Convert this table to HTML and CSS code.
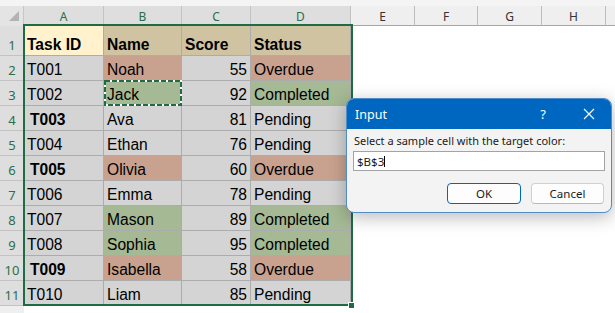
FILE: index.html
```html
<!DOCTYPE html>
<html>
<head>
<meta charset="utf-8">
<link rel="stylesheet" href="styles.css">
</head>
<body>
<div class="app">
  <div class="topstrip"></div>
  <div class="sheet">
    <div class="corner"><svg width="12" height="12" viewBox="0 0 12 12"><polygon points="11,1 11,11 1,11" fill="#b3b3b3"/></svg></div>
    <div class="ch sel">A</div><div class="ch sel">B</div><div class="ch sel">C</div><div class="ch sel">D</div>
    <div class="ch">E</div><div class="ch">F</div><div class="ch">G</div><div class="ch">H</div><div class="ch"></div>

    <div class="rh">1</div>
    <div class="c y b">Task ID</div><div class="c tan b">Name</div><div class="c tan b">Score</div><div class="c tan b">Status</div>
    <div class="e"></div><div class="e"></div><div class="e"></div><div class="e"></div><div class="e"></div>

    <div class="rh">2</div>
    <div class="c">T001</div><div class="c or">Noah</div><div class="c n">55</div><div class="c or">Overdue</div>
    <div class="e"></div><div class="e"></div><div class="e"></div><div class="e"></div><div class="e"></div>

    <div class="rh">3</div>
    <div class="c">T002</div><div class="c gr ants">Jack<svg class="antsvg" width="78" height="26" viewBox="0 0 78 26"><rect x="1" y="1" width="76" height="24" fill="none" stroke="#ffffff" stroke-width="2"/><rect x="1" y="1" width="76" height="24" fill="none" stroke="#1f6b43" stroke-width="2" stroke-dasharray="5 2"/></svg></div><div class="c n">92</div><div class="c gr">Completed</div>
    <div class="e"></div><div class="e"></div><div class="e"></div><div class="e"></div><div class="e"></div>

    <div class="rh">4</div>
    <div class="c b ind">T003</div><div class="c">Ava</div><div class="c n">81</div><div class="c">Pending</div>
    <div class="e"></div><div class="e"></div><div class="e"></div><div class="e"></div><div class="e"></div>

    <div class="rh">5</div>
    <div class="c">T004</div><div class="c">Ethan</div><div class="c n">76</div><div class="c">Pending</div>
    <div class="e"></div><div class="e"></div><div class="e"></div><div class="e"></div><div class="e"></div>

    <div class="rh">6</div>
    <div class="c b ind">T005</div><div class="c or">Olivia</div><div class="c n">60</div><div class="c or">Overdue</div>
    <div class="e"></div><div class="e"></div><div class="e"></div><div class="e"></div><div class="e"></div>

    <div class="rh">7</div>
    <div class="c">T006</div><div class="c">Emma</div><div class="c n">78</div><div class="c">Pending</div>
    <div class="e"></div><div class="e"></div><div class="e"></div><div class="e"></div><div class="e"></div>

    <div class="rh">8</div>
    <div class="c">T007</div><div class="c gr">Mason</div><div class="c n">89</div><div class="c gr">Completed</div>
    <div class="e"></div><div class="e"></div><div class="e"></div><div class="e"></div><div class="e"></div>

    <div class="rh">9</div>
    <div class="c">T008</div><div class="c gr">Sophia</div><div class="c n">95</div><div class="c gr">Completed</div>
    <div class="e"></div><div class="e"></div><div class="e"></div><div class="e"></div><div class="e"></div>

    <div class="rh">10</div>
    <div class="c b ind">T009</div><div class="c or">Isabella</div><div class="c n">58</div><div class="c or">Overdue</div>
    <div class="e"></div><div class="e"></div><div class="e"></div><div class="e"></div><div class="e"></div>

    <div class="rh">11</div>
    <div class="c">T010</div><div class="c">Liam</div><div class="c n">85</div><div class="c">Pending</div>
    <div class="e"></div><div class="e"></div><div class="e"></div><div class="e"></div><div class="e"></div>

    <div class="rh un"></div>
    <div class="e"></div><div class="e"></div><div class="e"></div><div class="e"></div>
    <div class="e"></div><div class="e"></div><div class="e"></div><div class="e"></div><div class="e"></div>
  </div>

  <div class="selection"></div>
  <div class="handle"></div>

  <div class="dialog">
    <div class="titlebar">
      <span class="title">Input</span>
      <span class="help">?</span>
      <svg class="close" width="12" height="12" viewBox="0 0 12 12"><path d="M1 1 L11 11 M11 1 L1 11" stroke="#ffffff" stroke-width="1.1" fill="none"/></svg>
    </div>
    <div class="dbody">
      <div class="label">Select a sample cell with the target color:</div>
      <div class="input"><span>$B$3</span><span class="caret"></span></div>
      <div class="buttons">
        <div class="btn primary">OK</div>
        <div class="btn">Cancel</div>
      </div>
    </div>
  </div>
</div>
</body>
</html>
```

FILE: styles.css
```css
* { box-sizing: border-box; }
html, body { margin: 0; padding: 0; background: #ffffff; }

.app {
  position: relative;
  width: 615px;
  height: 313px;
  overflow: hidden;
  background: #ffffff;
}

.topstrip {
  height: 6px;
  background: #f4f4f4;
}

.sheet {
  display: grid;
  grid-template-columns: 24px 80px 78px 69px 100px 64px 63px 64px 64px 20px;
  grid-template-rows: 20px 30px repeat(11, 25px);
}

.corner {
  background: #e4e4e4;
  border-right: 1px solid #c6c6c6;
  display: flex;
  align-items: flex-end;
  justify-content: flex-end;
  padding: 0 3px 4px 0;
}

.ch {
  background: #efefef;
  border-right: 1px solid #bdbdbd;
  border-bottom: 1px solid #a6a6a6;
  display: flex;
  align-items: center;
  justify-content: center;
  font-family: "Noto Sans", "Open Sans", sans-serif;
  font-size: 12px;
  color: #333333;
  padding-top: 1px;
}
.ch.sel {
  background: #dedede;
  color: #2b6e49;
  border-right-color: #c3c3c3;
}

.rh {
  background: #dedede;
  border-bottom: 1px solid #c3c3c3;
  display: flex;
  align-items: flex-end;
  justify-content: center;
  font-family: "Noto Sans", "Open Sans", sans-serif;
  font-size: 13px;
  line-height: 16px;
  color: #2b6e49;
  padding-bottom: 2px;
}
.rh.un {
  background: #efefef;
  color: #333333;
}

.c {
  background: #d4d4d4;
  border-right: 1px solid #acacac;
  border-bottom: 1px solid #acacac;
  display: flex;
  align-items: flex-end;
  padding: 0 3px 1.5px 3px;
  font-family: "Liberation Sans", Arial, sans-serif;
  font-size: 15.6px;
  line-height: 18px;
  color: #000000;
  white-space: nowrap;
  overflow: hidden;
}
.c.b { font-weight: bold; }
.c.ind { padding-left: 6px; }
.c.n { justify-content: flex-end; }
.c.y { background: #fff2cc; }
.c.tan { background: #cfc3a1; }
.c.or { background: #c9a28f; }
.c.gr { background: #a5b994; }

.ants { position: relative; overflow: visible; }
.antsvg {
  position: absolute;
  left: 0;
  top: -1px;
}

.e { background: #ffffff; }

.selection {
  position: absolute;
  left: 23px;
  top: 24px;
  width: 330px;
  height: 282px;
  border: 2px solid #1f6b43;
  pointer-events: none;
}
.handle {
  position: absolute;
  left: 348px;
  top: 302px;
  width: 7px;
  height: 7px;
  background: #1f6b43;
  border: 1px solid #ffffff;
}

.dialog {
  position: absolute;
  left: 346px;
  top: 98px;
  width: 266px;
  height: 115px;
  border-radius: 8px;
  background: #f3f3f3;
  border: 1px solid #4f8cc8;
  box-shadow: 0 4px 18px rgba(0, 0, 0, 0.28);
  overflow: hidden;
  font-family: "Noto Sans", "Open Sans", sans-serif;
}

.titlebar {
  height: 30px;
  background: #0067c0;
  display: flex;
  align-items: center;
  color: #ffffff;
  padding: 0 16px 0 8px;
}
.title {
  font-size: 12.5px;
  flex: 1;
}
.help {
  font-size: 13px;
  margin-right: 37px;
}
.close { display: block; }

.dbody {
  padding: 4px 6px 0 6px;
  display: flex;
  flex-direction: column;
}
.label {
  font-size: 11px;
  line-height: 16px;
  color: #1a1a1a;
  padding-left: 1px;
}
.input {
  margin-top: 2px;
  height: 20px;
  background: #ffffff;
  border: 1px solid #a3a3a3;
  display: flex;
  align-items: center;
  padding-left: 3px;
  font-size: 11.5px;
  color: #1a1a1a;
}
.caret {
  display: inline-block;
  width: 1px;
  height: 11px;
  background: #000000;
  margin-left: 0;
}
.buttons {
  margin-top: 12px;
  display: flex;
  justify-content: flex-end;
  gap: 10px;
  padding-right: 1px;
}
.btn {
  width: 73px;
  height: 21px;
  background: #fdfdfd;
  border: 1px solid #d0d0d0;
  border-bottom-color: #b8b8b8;
  border-radius: 4px;
  display: flex;
  align-items: center;
  justify-content: center;
  font-size: 11.5px;
  color: #1a1a1a;
}
.btn.primary {
  width: 74px;
  border: 1px solid #0067c0;
}
```
